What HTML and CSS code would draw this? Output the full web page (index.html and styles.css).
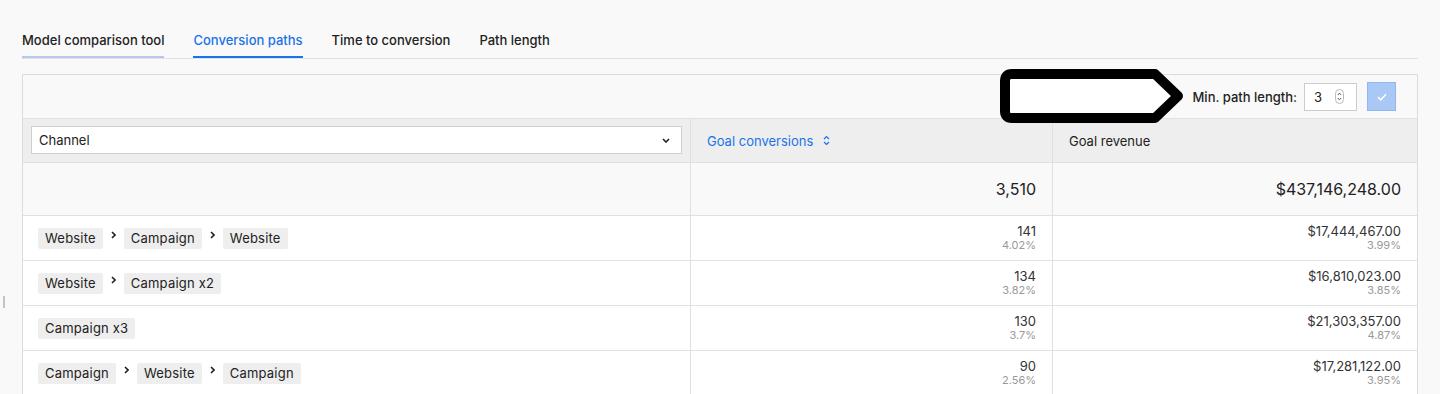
FILE: index.html
```html
<!DOCTYPE html>
<html lang="en">
<head>
  <meta charset="UTF-8" />
  <meta name="viewport" content="width=device-width,initial-scale=1.0" />
  <title>Conversion paths</title>
  <link rel="stylesheet" href="styles.css">
</head>
<body>
  <div class="edge-handle"></div>
  <div class="page">
    <nav class="tabs">
      <a class="tab tab-hover">Model comparison tool</a>
      <a class="tab tab-active">Conversion paths</a>
      <a class="tab">Time to conversion</a>
      <a class="tab">Path length</a>
    </nav>

    <div class="panel">
      <!-- toolbar with min path length filter -->
      <div class="toolbar">
        <svg class="callout" width="188" height="60" viewBox="0 0 188 60">
          <path d="M14 7 H157 L180 29 L157 51 H14 Q7 51 7 44 V14 Q7 7 14 7 Z" fill="#fff" stroke="#000" stroke-width="10" stroke-linejoin="round"/>
        </svg>
        <span class="toolbar-label">Min. path length:</span>
        <div class="num-input">
          <span>3</span>
          <svg width="9" height="15" viewBox="0 0 9 15">
            <rect x="0.5" y="0.5" width="8" height="14" rx="4" fill="none" stroke="#bbb"/>
            <path d="M2.8 6 L4.5 4.2 L6.2 6 M2.8 9 L4.5 10.8 L6.2 9" fill="none" stroke="#555" stroke-width="1"/>
          </svg>
        </div>
        <button class="apply-btn">
          <svg width="10" height="8" viewBox="0 0 10 8"><path d="M1 4.2 L3.8 6.8 L9 1.2" fill="none" stroke="#fff" stroke-width="1.6"/></svg>
        </button>
      </div>

      <div class="row head-row">
        <div class="cell">
          <div class="select">
            <span>Channel</span>
            <svg width="8" height="5" viewBox="0 0 8 5"><path d="M1 1 L4 4 L7 1" fill="none" stroke="#222" stroke-width="1.6"/></svg>
          </div>
        </div>
        <div class="cell head-cell sortable">
          Goal conversions
          <svg width="7" height="11" viewBox="0 0 7 11"><path d="M1 4 L3.5 1.5 L6 4 M1 7 L3.5 9.5 L6 7" fill="none" stroke="#1a73e8" stroke-width="1.2"/></svg>
        </div>
        <div class="cell head-cell">Goal revenue</div>
      </div>

      <div class="row total-row">
        <div class="cell"></div>
        <div class="cell num">3,510</div>
        <div class="cell num">$437,146,248.00</div>
      </div>

      <div class="row data-row">
        <div class="cell path">
          <span class="chip">Website</span><i class="sep"></i><span class="chip">Campaign</span><i class="sep"></i><span class="chip">Website</span>
        </div>
        <div class="cell num"><span class="val">141</span><span class="pct">4.02%</span></div>
        <div class="cell num"><span class="val">$17,444,467.00</span><span class="pct">3.99%</span></div>
      </div>
      <div class="row data-row">
        <div class="cell path">
          <span class="chip">Website</span><i class="sep"></i><span class="chip">Campaign x2</span>
        </div>
        <div class="cell num"><span class="val">134</span><span class="pct">3.82%</span></div>
        <div class="cell num"><span class="val">$16,810,023.00</span><span class="pct">3.85%</span></div>
      </div>
      <div class="row data-row">
        <div class="cell path">
          <span class="chip">Campaign x3</span>
        </div>
        <div class="cell num"><span class="val">130</span><span class="pct">3.7%</span></div>
        <div class="cell num"><span class="val">$21,303,357.00</span><span class="pct">4.87%</span></div>
      </div>
      <div class="row data-row">
        <div class="cell path">
          <span class="chip">Campaign</span><i class="sep"></i><span class="chip">Website</span><i class="sep"></i><span class="chip">Campaign</span>
        </div>
        <div class="cell num"><span class="val">90</span><span class="pct">2.56%</span></div>
        <div class="cell num"><span class="val">$17,281,122.00</span><span class="pct">3.95%</span></div>
      </div>
    </div>
  </div>
</body>
</html>
```

FILE: styles.css
```css
html, body {
  margin: 0;
  background: #f9f9f9;
  font-family: Inter, "Liberation Sans", sans-serif;
  color: #222;
  overflow: hidden;
}
.page {
  padding: 32px 22px 0;
}

/* small resize grip at the left edge */
.edge-handle {
  position: absolute;
  left: 3px;
  top: 296px;
  width: 2px;
  height: 12px;
  background: #c4c4c4;
}

/* Tabs */
.tabs {
  display: flex;
  gap: 29px;
  border-bottom: 1px solid #e2e2e2;
}
.tab {
  font-size: 13px;
  font-weight: 500;
  line-height: 16px;
  padding-bottom: 8px;
  border-bottom: 2px solid transparent;
  color: #222;
}
.tab-hover {
  border-bottom-color: #b5c9ee;
}
.tab-active {
  color: #1a73e8;
  border-bottom-color: #1a73e8;
}

/* Panel */
.panel {
  margin-top: 15px;
  border: 1px solid #dcdcdc;
  border-bottom: none;
  background: #fff;
}
.toolbar {
  position: relative;
  height: 43px;
  display: flex;
  align-items: center;
  justify-content: flex-end;
  padding-right: 21px;
  background: #f9f9f9;
  border-bottom: 1px solid #e0e0e0;
}
.callout {
  position: absolute;
  left: 975px;
  top: -8px;
}
.toolbar-label {
  font-size: 13px;
  font-weight: 500;
  margin-right: 7px;
}
.num-input {
  height: 26px;
  border: 1px solid #ccc;
  background: #fff;
  display: flex;
  align-items: center;
  justify-content: space-between;
  padding: 0 12px 0 9px;
  width: 30px;
  font-size: 13px;
}
.apply-btn {
  margin-left: 10px;
  width: 29px;
  height: 29px;
  padding: 0;
  border: 1px solid #92b6ee;
  background: #a9c8f6;
  display: flex;
  align-items: center;
  justify-content: center;
}

/* Table rows */
.row {
  display: grid;
  grid-template-columns: 667px 362px 1fr;
}
.row .cell + .cell {
  border-left: 1px solid #e0e0e0;
}
.head-row {
  height: 43px;
  background: #eeeeee;
  border-bottom: 1px solid #e0e0e0;
}
.head-row .cell:first-child {
  padding: 7px 8px;
}
.select {
  height: 26px;
  border: 1px solid #cfcfcf;
  background: #fff;
  display: flex;
  align-items: center;
  justify-content: space-between;
  padding: 0 11px 0 7px;
  font-size: 13px;
}
.head-cell {
  display: flex;
  align-items: center;
  gap: 10px;
  padding-left: 16px;
  font-size: 13px;
}
.sortable {
  color: #1a73e8;
}
.total-row {
  height: 52px;
  background: #f9f9f9;
  border-bottom: 1px solid #e0e0e0;
}
.total-row .num {
  font-size: 16px;
}
.data-row {
  height: 44px;
  border-bottom: 1px solid #e2e2e2;
}
.num {
  display: flex;
  flex-direction: column;
  align-items: flex-end;
  justify-content: center;
  padding-right: 16px;
}
.val {
  font-size: 13px;
  line-height: 15px;
  color: #333;
}
.pct {
  font-size: 11px;
  line-height: 13px;
  color: #999;
}
.path {
  display: flex;
  align-items: center;
  padding-left: 15px;
}
.chip {
  background: #eeeeee;
  border-radius: 2px;
  padding: 0 7px;
  height: 21px;
  line-height: 21px;
  font-size: 13px;
  letter-spacing: 0.2px;
  color: #222;
}
.sep {
  width: 5px;
  height: 8px;
  margin: 0 8px 6px 8px;
  background: no-repeat center/5px 8px;
  background-image: url("data:image/svg+xml,%3Csvg xmlns='http://www.w3.org/2000/svg' viewBox='0 0 5 8'%3E%3Cpath d='M1 1 L4 4 L1 7' fill='none' stroke='%23222' stroke-width='1.6'/%3E%3C/svg%3E");
}
```
